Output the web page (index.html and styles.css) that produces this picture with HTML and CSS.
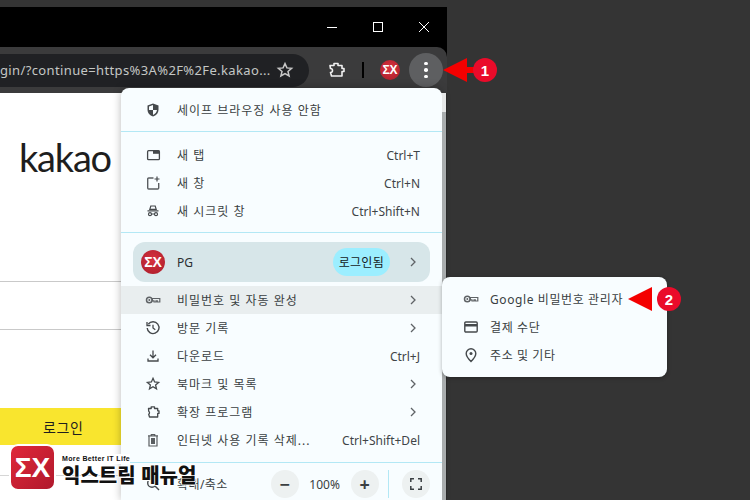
FILE: index.html
```html
<!DOCTYPE html>
<html lang="ko">
<head>
<meta charset="UTF-8">
<title>Chrome menu</title>
<link rel="stylesheet" href="styles.css">
</head>
<body>
<div class="window">
    <div class="titlebar">
        <svg class="win-btn" width="46" height="20" viewBox="0 0 46 20"><path d="M18 10.500h10" stroke="#fff" fill="none"/></svg>
        <svg class="win-btn" width="46" height="20" viewBox="0 0 46 20"><rect x="18.500" y="5.500" width="9" height="9" stroke="#fff" fill="none"/></svg>
        <svg class="win-btn" width="46" height="20" viewBox="0 0 46 20"><path d="M18 5l10 10M28 5L18 15" stroke="#fff" fill="none"/></svg>
    </div>
    <div class="toolbar">
        <div class="address">
            <span class="url">gin/?continue=https%3A%2F%2Fe.kakao...</span>
            <svg width="18" height="18" viewBox="0 0 18 18"><path d="M9 2.600l1.900 4.300 4.700.4-3.600 3.100 1.100 4.600L9 12.600 4.900 15l1.100-4.600L2.400 7.300l4.700-.4z" fill="none" stroke="#c8c8c8" stroke-width="1.500"/></svg>
        </div>
        <svg class="puzzle" width="20" height="20" viewBox="0 0 20 20"><path d="M4 5.500h4v-2h4v2h4v3h2v3h-2v4.500H5.500l-1-3.500a2 2 0 0 0 0-4z" fill="none" stroke="#f0f0f0" stroke-width="1.600" stroke-linejoin="round"/></svg>
        <span class="tool-sep"></span>
        <span class="avatar avatar-tool">ΣX</span>
        <span class="kebab"><i></i><i></i><i></i></span>
    </div>
    <div class="page">
        <div class="brand">kakao</div>
        <div class="field field-first"></div>
        <div class="field"></div>
        <div class="login-btn"><span>로그인</span></div>
        <div class="under-line"></div>
    </div>
</div>

<div class="menu">
    <div class="row">
        <svg class="ico" viewBox="0 0 16 16"><path d="M8 1.500L2.500 3.500v4c0 3.400 2.300 6 5.500 7 3.200-1 5.500-3.600 5.500-7v-4z" fill="#45494c"/><path d="M8 3v5H4V4.500zM8 8h4c-.3 2.300-1.800 4-4 4.900z" fill="#f8fdff"/></svg>
        <span class="label">세이프 브라우징 사용 안함</span>
    </div>
    <div class="sep"></div>
    <div class="row">
        <svg class="ico" viewBox="0 0 16 16"><rect x="2.600" y="3.700" width="11.800" height="9" rx="1" fill="none" stroke="#45494c" stroke-width="1.300"/><path d="M8 3.500h6.500v3.300H8z" fill="#45494c"/></svg>
        <span class="label">새 탭</span><span class="keys">Ctrl+T</span>
    </div>
    <div class="row">
        <svg class="ico" viewBox="0 0 16 16"><path d="M8.500 3H3.700a1 1 0 0 0-1 1v9a1 1 0 0 0 1 1h9a1 1 0 0 0 1-1V8" fill="none" stroke="#5a5e61" stroke-width="1.400"/><path d="M12 1.500v5M9.500 4h5" stroke="#45494c" stroke-width="1.200"/></svg>
        <span class="label">새 창</span><span class="keys">Ctrl+N</span>
    </div>
    <div class="row">
        <svg class="ico" viewBox="0 0 16 16"><path d="M5.800 3h4.400l1 3.400H4.800zM2.500 7.800h11" fill="none" stroke="#45494c" stroke-width="1.200"/><circle cx="5" cy="11.200" r="1.500" fill="none" stroke="#45494c" stroke-width="1.200"/><circle cx="11" cy="11.200" r="1.500" fill="none" stroke="#45494c" stroke-width="1.200"/><path d="M6.500 11h3" stroke="#45494c" stroke-width="1"/></svg>
        <span class="label">새 시크릿 창</span><span class="keys">Ctrl+Shift+N</span>
    </div>
    <div class="sep"></div>
    <div class="profile">
        <span class="avatar avatar-menu">ΣX</span>
        <span class="label profile-name">PG</span>
        <span class="signed">로그인됨</span>
        <svg class="chev" viewBox="0 0 10 10"><path d="M3 1l4 4-4 4" fill="none" stroke="#5f6366" stroke-width="1.300"/></svg>
    </div>
    <div class="row row-on">
        <svg class="ico" viewBox="0 0 16 16"><circle cx="4.300" cy="8" r="2.800" fill="none" stroke="#5f6366" stroke-width="1.500"/><circle cx="4.300" cy="8" r="1" fill="#5f6366"/><path d="M7.300 6.500h7.500v3.500h-2.500V8.800h-1.300V10H9V8.800H7.300z" fill="none" stroke="#5f6366" stroke-width="1.200"/></svg>
        <span class="label">비밀번호 및 자동 완성</span>
        <svg class="chev" viewBox="0 0 10 10"><path d="M3 1l4 4-4 4" fill="none" stroke="#5f6366" stroke-width="1.300"/></svg>
    </div>
    <div class="row">
        <svg class="ico" viewBox="0 0 16 16"><path d="M3.300 4.200A5.900 5.900 0 1 1 2.200 8" fill="none" stroke="#45494c" stroke-width="1.400"/><path d="M2 2v3.500h3.500" fill="none" stroke="#45494c" stroke-width="1.300"/><path d="M8 4.800V8l2.300 1.800" fill="none" stroke="#45494c" stroke-width="1.300"/></svg>
        <span class="label">방문 기록</span>
        <svg class="chev" viewBox="0 0 10 10"><path d="M3 1l4 4-4 4" fill="none" stroke="#5f6366" stroke-width="1.300"/></svg>
    </div>
    <div class="row">
        <svg class="ico" viewBox="0 0 16 16"><path d="M8 2.500v7M5 6.800l3 3 3-3M3 10.500v2.500h10v-2.500" fill="none" stroke="#45494c" stroke-width="1.300"/></svg>
        <span class="label">다운로드</span><span class="keys">Ctrl+J</span>
    </div>
    <div class="row">
        <svg class="ico" viewBox="0 0 16 16"><path d="M8 2.300l1.600 3.700 4 .4-3 2.600.9 3.900L8 10.800l-3.500 2.100.9-3.900-3-2.600 4-.4z" fill="none" stroke="#45494c" stroke-width="1.300"/></svg>
        <span class="label">북마크 및 목록</span>
        <svg class="chev" viewBox="0 0 10 10"><path d="M3 1l4 4-4 4" fill="none" stroke="#5f6366" stroke-width="1.300"/></svg>
    </div>
    <div class="row">
        <svg class="ico" viewBox="0 0 16 16"><path d="M3.500 4.500h2.700V2.800h3.300v1.700h3.200v2.300H14v2.600h-1.300V13H4.500l-.8-2.800a1.700 1.700 0 0 0 0-2.900z" fill="none" stroke="#45494c" stroke-width="1.300" stroke-linejoin="round"/></svg>
        <span class="label">확장 프로그램</span>
        <svg class="chev" viewBox="0 0 10 10"><path d="M3 1l4 4-4 4" fill="none" stroke="#5f6366" stroke-width="1.300"/></svg>
    </div>
    <div class="row">
        <svg class="ico" viewBox="0 0 16 16"><path d="M3 3.800h10M6.300 3.800V2.500h3.400v1.300M4 3.800h8V14H4z" fill="none" stroke="#5a5e61" stroke-width="1.200"/><path d="M6 6h4v6H6z" fill="#5a5e61"/></svg>
        <span class="label">인터넷 사용 기록 삭제...</span><span class="keys">Ctrl+Shift+Del</span>
    </div>
    <div class="sep sep-zoom"></div>
    <div class="zoom-row">
        <svg class="ico" viewBox="0 0 16 16"><circle cx="7" cy="7" r="4.300" fill="none" stroke="#45494c" stroke-width="1.400"/><path d="M10 10l4 4" stroke="#45494c" stroke-width="1.400"/></svg>
        <span class="label">확대/축소</span>
        <span class="round-btn">−</span>
        <span class="zoom-val">100%</span>
        <span class="round-btn">+</span>
        <span class="zoom-line"></span>
        <span class="round-btn">
            <svg width="12" height="12" viewBox="0 0 12 12"><path d="M.8 4V.8H4M8 .8h3.200V4M11.200 8v3.200H8M4 11.200H.8V8" fill="none" stroke="#3a3f42" stroke-width="1.500"/></svg>
        </span>
    </div>
</div>

<div class="scroll-strip"></div>

<div class="submenu">
    <div class="sub-row">
        <svg class="ico" viewBox="0 0 16 16"><circle cx="4.300" cy="8" r="2.800" fill="none" stroke="#5f6366" stroke-width="1.500"/><circle cx="4.300" cy="8" r="1" fill="#5f6366"/><path d="M7.300 6.500h7.500v3.500h-2.500V8.800h-1.300V10H9V8.800H7.300z" fill="none" stroke="#5f6366" stroke-width="1.200"/></svg>
        <span class="label">Google 비밀번호 관리자</span>
    </div>
    <div class="sub-row">
        <svg class="ico" viewBox="0 0 16 16"><rect x="1.800" y="3" width="12.400" height="10" rx="1" fill="none" stroke="#45494c" stroke-width="1.400"/><path d="M2 5h12v2.500H2z" fill="#45494c"/></svg>
        <span class="label">결제 수단</span>
    </div>
    <div class="sub-row">
        <svg class="ico" viewBox="0 0 16 16"><path d="M8 1.800a4.800 4.800 0 0 0-4.800 4.800C3.200 10 8 14.500 8 14.500s4.800-4.500 4.800-7.900A4.800 4.800 0 0 0 8 1.800z" fill="none" stroke="#45494c" stroke-width="1.400"/><circle cx="8" cy="6.500" r="1.500" fill="#45494c"/></svg>
        <span class="label">주소 및 기타</span>
    </div>
</div>

<div class="mark mark-one"><span class="mark-arrow"></span><span class="mark-tail"></span><span class="mark-num">1</span></div>
<div class="mark mark-two"><span class="mark-arrow"></span><span class="mark-num">2</span></div>

<div class="watermark">
    <div class="wm-logo">ΣX</div>
    <div class="wm-text">
        <div class="wm-small">More Better IT Life</div>
        <div class="wm-big">익스트림 매뉴얼</div>
    </div>
</div>
</body>
</html>
```

FILE: styles.css
```css
* {
    box-sizing: border-box;
}

html, body {
    height: 100%;
}

body {
    margin: 0;
    background-color: #343434;
    font-family: "Noto Sans", "Noto Sans CJK KR", sans-serif;
    overflow: hidden;
    position: relative;
}

.window {
    width: 447px;
    height: 493px;
    margin-top: 7px;
    background-color: #000;
    display: flex;
    flex-direction: column;
    overflow: hidden;
}

.titlebar {
    height: 40px;
    flex: none;
    background-color: #000;
    display: flex;
    justify-content: flex-end;
    padding-top: 10px;
}

.win-btn {
    display: block;
}

.toolbar {
    height: 46px;
    flex: none;
    background-color: #3b3b3c;
    border-top-right-radius: 10px;
    display: flex;
    align-items: center;
}

.address {
    width: 309px;
    height: 33px;
    background-color: #202124;
    border-radius: 0 17px 17px 0;
    display: flex;
    align-items: center;
    justify-content: space-between;
    padding-right: 15px;
    flex: none;
}

.url {
    color: #c4c7c5;
    font-size: 13px;
    letter-spacing: 0.37px;
    white-space: nowrap;
}

.puzzle {
    margin-left: 17px;
    flex: none;
}

.tool-sep {
    width: 2px;
    height: 16px;
    background-color: #000;
    margin-left: 16px;
    flex: none;
}

.avatar {
    border-radius: 50%;
    background: radial-gradient(circle at 50% 40%, #d8333f, #a81c2a);
    color: #fff;
    display: flex;
    align-items: center;
    justify-content: center;
    font-family: "Liberation Sans", sans-serif;
    font-weight: bold;
    flex: none;
}

.avatar-tool {
    width: 20px;
    height: 20px;
    font-size: 12px;
    margin-left: 16px;
}

.avatar-menu {
    width: 24px;
    height: 24px;
    font-size: 14px;
}

.kebab {
    width: 34px;
    height: 34px;
    border-radius: 50%;
    background-color: #5e5f61;
    margin-left: 9px;
    display: flex;
    flex-direction: column;
    align-items: center;
    justify-content: center;
    gap: 3px;
    flex: none;
}

.kebab i {
    width: 3.500px;
    height: 3.500px;
    border-radius: 50%;
    background-color: #fff;
}

.page {
    flex: 1;
    background-color: #fff;
}

.brand {
    font-family: "Lato", sans-serif;
    font-size: 38px;
    line-height: 38px;
    letter-spacing: -1.2px;
    color: #1e1e1e;
    padding-left: 19px;
    margin-top: 45px;
}

.field {
    height: 48px;
    border-bottom: 1px solid #c9c9c9;
}

.field-first {
    margin-top: 57px;
    height: 49px;
}

.login-btn {
    height: 37px;
    margin-top: 78px;
    background-color: #f9e52e;
    display: flex;
    align-items: center;
    padding-left: 43px;
    font-size: 14px;
    color: #1e1e1e;
    letter-spacing: 0.6px;
}

.under-line {
    height: 1px;
    margin-top: 30px;
    background-color: #d6d6d6;
}

.menu {
    position: absolute;
    left: 121px;
    top: 88px;
    width: 321px;
    height: 412px;
    background-color: #f8fdff;
    border-radius: 8px 8px 0 0;
    padding-top: 8px;
    box-shadow: 0 0 8px rgba(0, 0, 0, 0.28);
}

.row,
.sub-row {
    height: 28px;
    display: flex;
    align-items: center;
    padding-left: 24px;
    padding-right: 22px;
    color: #3a3f42;
}

.row-on {
    background-color: #e9eeef;
}

.ico {
    width: 16px;
    height: 16px;
    flex: none;
    margin-right: 16px;
}

.label {
    font-size: 12px;
    letter-spacing: 1px;
    white-space: nowrap;
}

.keys {
    margin-left: auto;
    font-size: 12px;
    color: #3f4447;
}

.chev {
    width: 10px;
    height: 10px;
    margin-left: auto;
    margin-right: 2px;
}

.sep {
    height: 1px;
    background-color: #b3e8f5;
    margin: 7px 0 9px;
}

.sep-zoom {
    margin: 8px 0 5px;
}

.profile {
    height: 40px;
    margin: 8px 12px 4px;
    padding: 0 12px 0 8px;
    background-color: #d7e6e9;
    border-radius: 12px;
    display: flex;
    align-items: center;
    color: #2b2f31;
}

.profile-name {
    margin-left: 12px;
    letter-spacing: 0;
}

.signed {
    margin-left: auto;
    margin-right: 18px;
    height: 28px;
    padding: 0 6px;
    border-radius: 14px;
    background-color: #9ceeff;
    display: flex;
    align-items: center;
    font-size: 12px;
    letter-spacing: 0.3px;
    color: #15191b;
}

.profile .chev {
    margin: 0;
}

.zoom-row {
    height: 32px;
    display: flex;
    align-items: center;
    padding-left: 24px;
    color: #3a3f42;
}

.round-btn {
    width: 28px;
    height: 28px;
    border-radius: 50%;
    background-color: #edf1f1;
    display: flex;
    align-items: center;
    justify-content: center;
    font-size: 18px;
    font-weight: bold;
    color: #3a3f42;
    flex: none;
}

.zoom-row .label {
    margin-right: 43px;
    letter-spacing: 0.4px;
}

.zoom-val {
    width: 52px;
    text-align: center;
    font-size: 12px;
}

.zoom-line {
    width: 1px;
    height: 28px;
    background-color: #b3e8f5;
    margin: 0 13px 0 9px;
}

.scroll-strip {
    position: absolute;
    left: 442px;
    top: 93px;
    width: 5px;
    height: 407px;
    background: linear-gradient(#e6e8e8 19px, #a9adae 19px);
    border-right: 1px solid #2a2a2a;
}

.submenu {
    position: absolute;
    left: 442px;
    top: 277px;
    width: 225px;
    height: 100px;
    background-color: #f8fdff;
    border-radius: 8px;
    padding-top: 8px;
    box-shadow: 0 1px 4px rgba(0, 0, 0, 0.3);
}

.sub-row {
    padding-left: 21px;
}

.sub-row .ico {
    margin-right: 11px;
}

.sub-row .label {
    letter-spacing: 0.6px;
}

.mark {
    position: absolute;
    display: flex;
    align-items: center;
}

.mark-one {
    left: 443px;
    top: 58px;
    height: 24px;
}

.mark-two {
    left: 628px;
    top: 287px;
    height: 24px;
}

.mark-arrow {
    width: 0;
    height: 0;
    border-top: 12px solid transparent;
    border-bottom: 12px solid transparent;
    border-right: 24px solid #f40000;
}

.mark-tail {
    width: 10px;
    height: 6px;
    background-color: #f40000;
}

.mark-num {
    width: 24px;
    height: 24px;
    border-radius: 50%;
    background-color: #ea0b2a;
    color: #fff;
    font-family: "Liberation Sans", sans-serif;
    font-weight: bold;
    font-size: 15px;
    display: flex;
    align-items: center;
    justify-content: center;
    margin-left: -4px;
}

.mark-two .mark-num {
    margin-left: 5px;
}

.watermark {
    position: absolute;
    left: 9px;
    top: 444px;
    display: flex;
    gap: 6px;
}

.wm-logo {
    width: 47px;
    height: 47px;
    border: 2px solid #fff;
    border-radius: 9px;
    background: linear-gradient(135deg, #e0283a, #b0182c);
    color: #fff;
    font-family: "Liberation Sans", sans-serif;
    font-weight: bold;
    font-size: 28px;
    display: flex;
    align-items: center;
    justify-content: center;
}

.wm-text {
    padding-top: 10px;
}

.wm-small {
    font-family: "Liberation Sans", sans-serif;
    font-size: 7px;
    line-height: 10px;
    font-weight: bold;
    letter-spacing: 0.35px;
    color: #111;
    background-color: #fff;
    width: max-content;
}

.wm-big {
    font-family: "Noto Sans CJK KR", sans-serif;
    font-size: 20px;
    line-height: 22px;
    font-weight: 900;
    color: #111;
    white-space: nowrap;
    text-shadow: 1px 0 #fff, -1px 0 #fff, 0 1px #fff, 0 -1px #fff;
}
```
